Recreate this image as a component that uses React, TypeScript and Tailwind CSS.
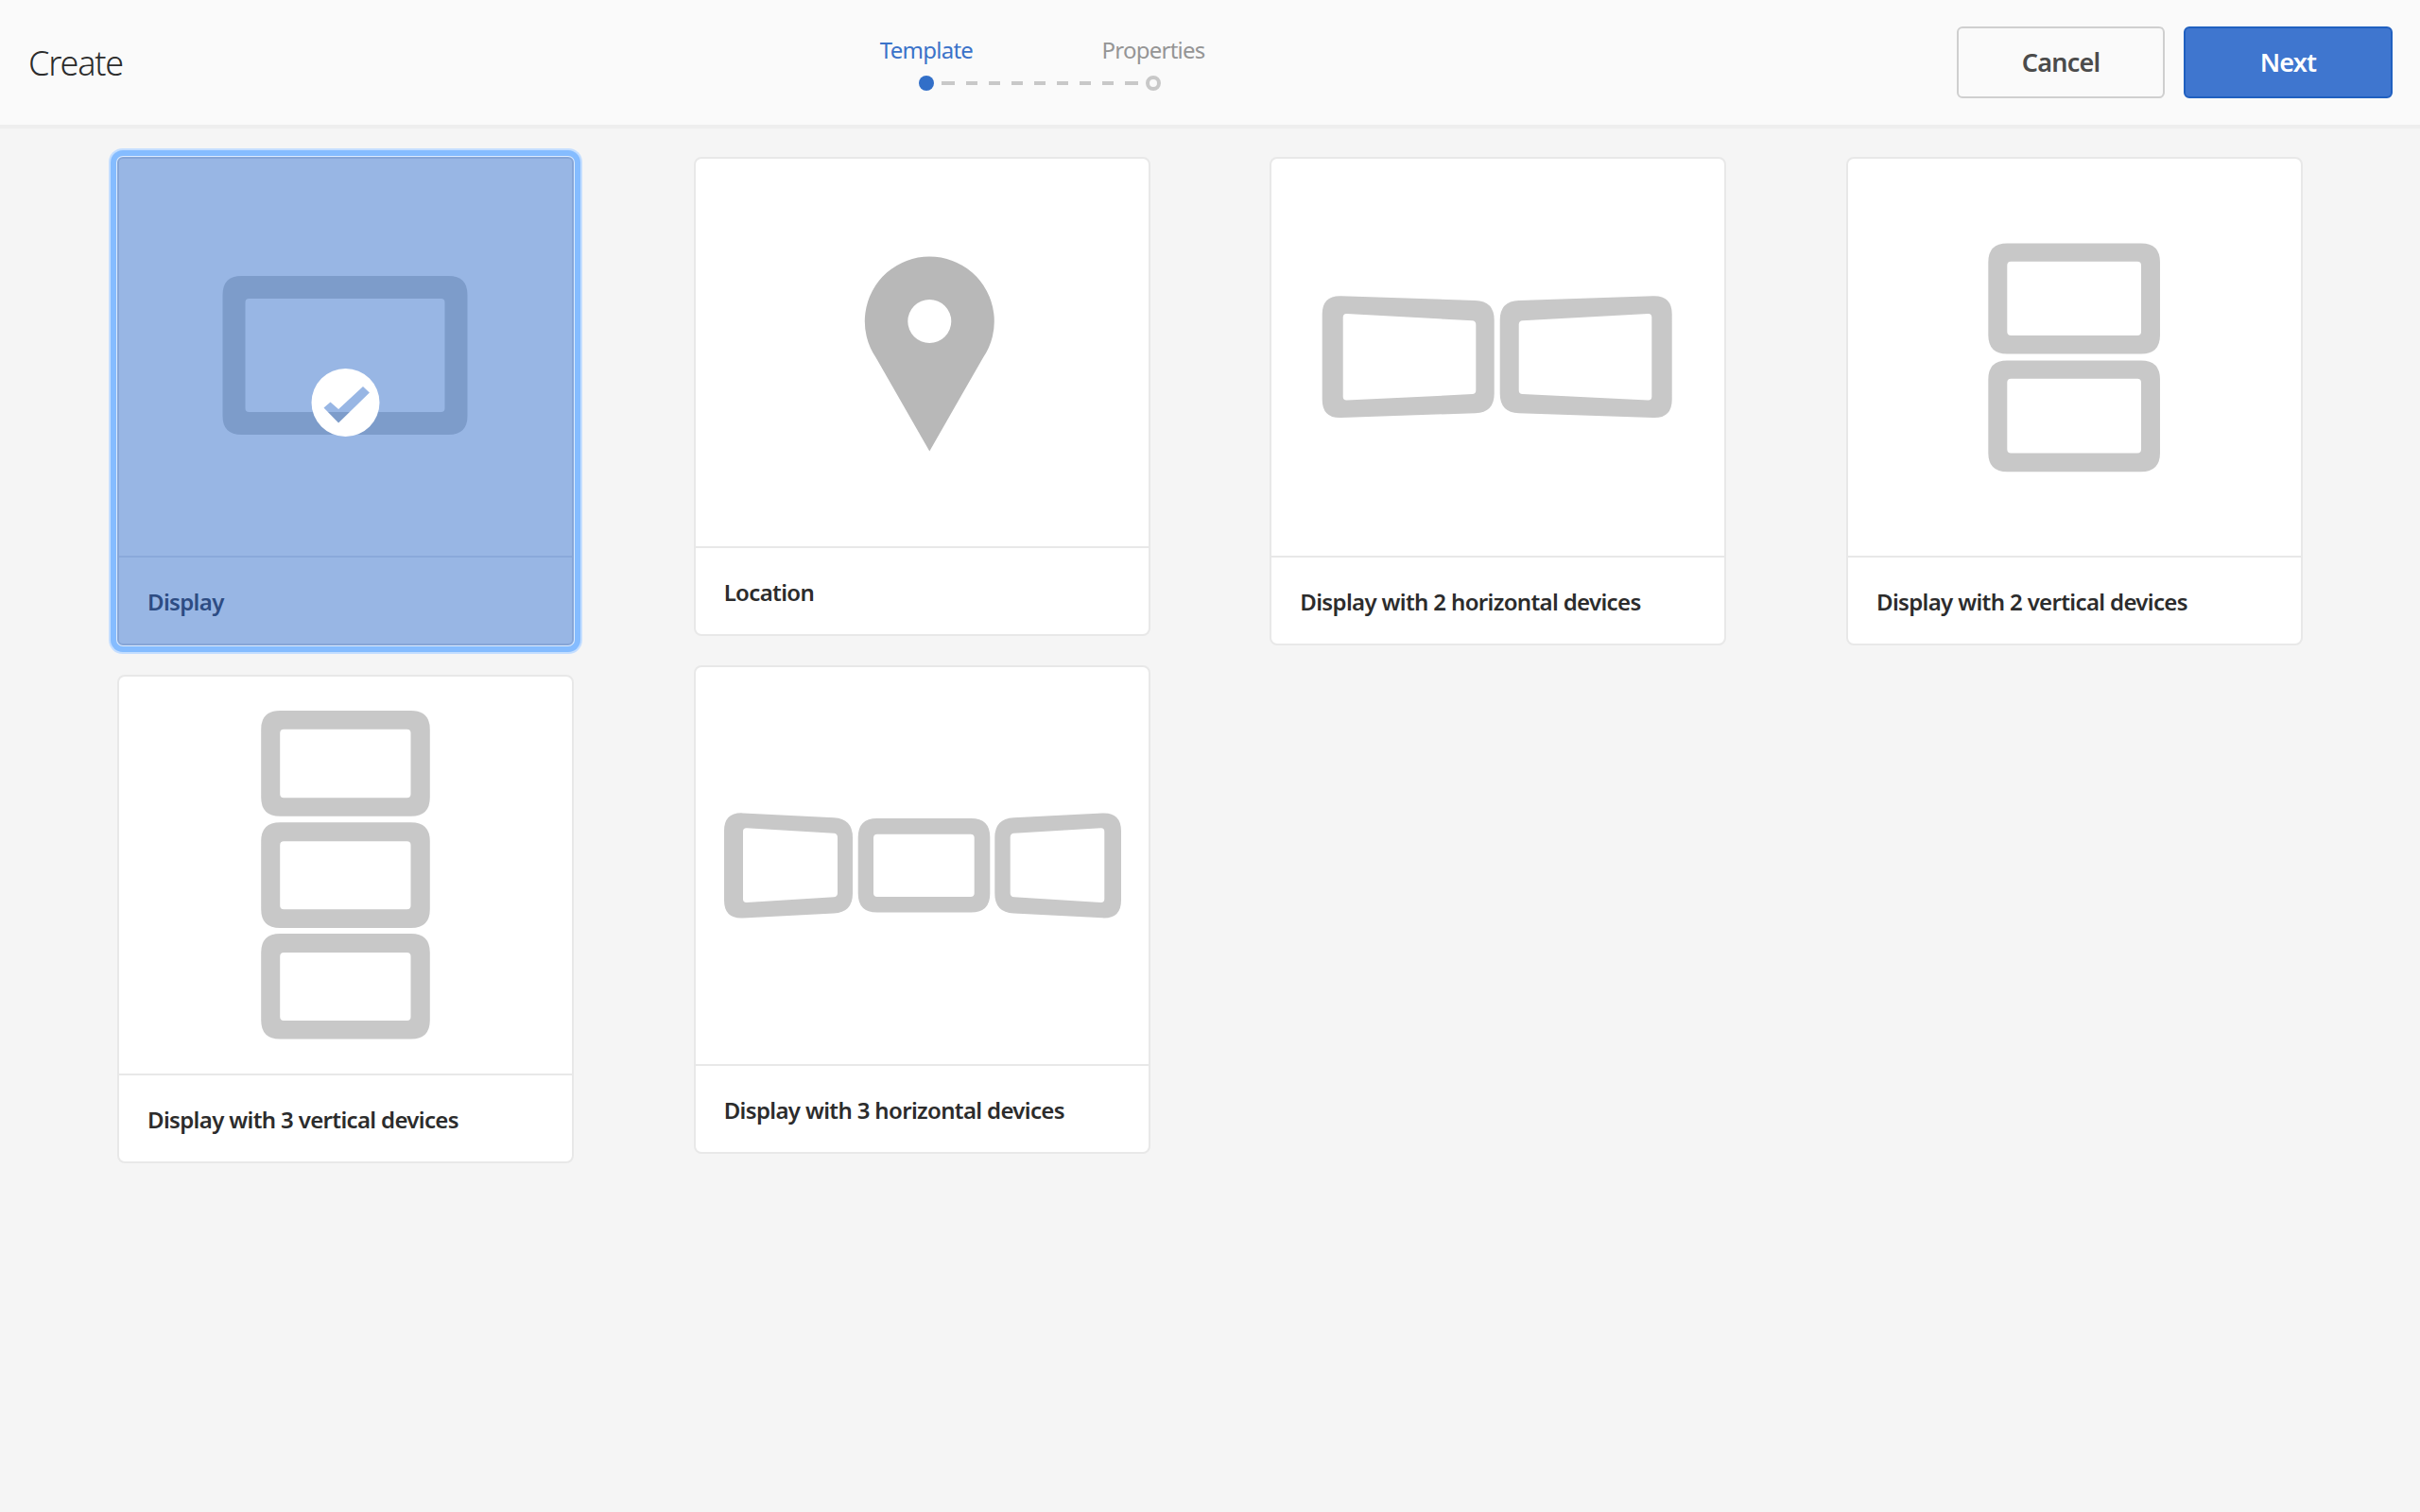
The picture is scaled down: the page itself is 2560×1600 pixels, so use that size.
import React, { ReactNode } from 'react';

type Point = [number, number];

// Builds a closed path with rounded corners from a list of corner points
function roundedPath(points: Point[], r: number): string {
  const n = points.length;
  let d = '';
  points.forEach((p, i) => {
    const prev = points[(i + n - 1) % n];
    const next = points[(i + 1) % n];
    const toward = (q: Point): Point => {
      const dx = q[0] - p[0];
      const dy = q[1] - p[1];
      const len = Math.hypot(dx, dy);
      return [p[0] + (dx / len) * r, p[1] + (dy / len) * r];
    };
    const a = toward(prev);
    const b = toward(next);
    d += `${i === 0 ? 'M' : 'L'}${a[0]} ${a[1]} Q${p[0]} ${p[1]} ${b[0]} ${b[1]} `;
  });
  return d + 'Z';
}

function box(x1: number, y1: number, x2: number, y2: number): Point[] {
  return [[x1, y1], [x2, y1], [x2, y2], [x1, y2]];
}

function Frame({ outer, inner, r = 20, fill = '#c8c8c8' }: { outer: Point[]; inner: Point[]; r?: number; fill?: string }) {
  return <path fillRule="evenodd" fill={fill} d={`${roundedPath(outer, r)} ${roundedPath(inner, 4)}`} />;
}

function Thumb({ short, children }: { short?: boolean; children: ReactNode }) {
  return (
    <svg viewBox={`0 0 479 ${short ? 410 : 420}`} className={short ? 'block h-[410px] w-[479px]' : 'block h-[420px] w-[479px]'}>
      {children}
    </svg>
  );
}

function DisplayIcon() {
  return (
    <Thumb>
      <g transform="translate(0.5 0)">
        <Frame outer={box(109, 124, 368, 292)} inner={box(133, 148, 344, 268)} fill="#7d9cca" />
        <path
          fill="#ffffff"
          fillRule="evenodd"
          d="M203 258a36 36 0 1 0 72 0a36 36 0 1 0 -72 0Z M216 263.6 L223 257.5 L231.6 265 L257.5 241 L264.4 247.6 L231.6 279.6 Z"
        />
      </g>
    </Thumb>
  );
}

function LocationIcon() {
  return (
    <Thumb short>
      <path
        fill="#b8b8b8"
        fillRule="evenodd"
        transform="translate(1 0)"
        d="M189.64 210.5 A68.5 68.5 0 1 1 302.96 210.5 L246.3 309.5 Z M223.3 172a23 23 0 1 0 46 0a23 23 0 1 0 -46 0Z"
      />
    </Thumb>
  );
}

function TwoHorizontalIcon() {
  return (
    <Thumb>
      <Frame
        outer={[[53.7, 144.5], [235.7, 150.7], [235.7, 268.5], [53.7, 274.7]]}
        inner={[[75.7, 163.8], [216.3, 171.4], [216.3, 248.9], [75.7, 255.8]]}
      />
      <Frame
        outer={[[241.7, 150.7], [423.7, 144.5], [423.7, 274.7], [241.7, 268.5]]}
        inner={[[261.7, 171.4], [402.3, 163.8], [402.3, 255.8], [261.7, 248.9]]}
      />
    </Thumb>
  );
}

function TwoVerticalIcon() {
  return (
    <Thumb>
      <Frame outer={box(148.3, 89.4, 330, 206.5)} inner={box(168.3, 108.7, 310, 187)} />
      <Frame outer={box(148.3, 213.4, 330, 331.2)} inner={box(168.3, 232.7, 310, 311.5)} />
    </Thumb>
  );
}

function ThreeVerticalIcon() {
  return (
    <Thumb>
      <g transform="translate(0.5 0.7)">
        <Frame outer={box(149.7, 35.2, 328.3, 147.1)} inner={box(169.7, 55.1, 308, 127.5)} />
        <Frame outer={box(149.7, 153.6, 328.3, 265.2)} inner={box(169.7, 173.5, 308, 245.5)} />
        <Frame outer={box(149.7, 271.4, 328.3, 382.9)} inner={box(169.7, 291.4, 308, 363.3)} />
      </g>
    </Thumb>
  );
}

function ThreeHorizontalIcon() {
  return (
    <Thumb>
      <g transform="translate(1 0.5)">
        <Frame
          outer={[[29, 152.9], [165, 159.8], [165, 259], [29, 265.9]]}
          inner={[[49, 169.5], [149, 175.6], [149, 242.5], [49, 248.7]]}
        />
        <Frame outer={box(170.7, 159.5, 310.3, 259)} inner={box(187, 176.3, 293.7, 242.5)} />
        <Frame
          outer={[[315.3, 159.8], [449, 152.9], [449, 265.9], [315.3, 259]]}
          inner={[[331.7, 175.6], [431.3, 169.5], [431.3, 248.7], [331.7, 242.5]]}
        />
      </g>
    </Thumb>
  );
}

function TemplateCard({ label, selected, children }: { label: string; selected?: boolean; children: ReactNode }) {
  if (selected) {
    return (
      <div className="w-[483px] overflow-hidden rounded-[6px] border-2 border-[#86a5d6] bg-[#98b6e4] shadow-[0_0_0_1px_#dcebff,0_0_0_7px_#85bcff,0_0_0_9px_#c4deff]">
        {children}
        <div className="flex h-[93px] items-center border-t-2 border-[#8aa9da] pl-[30px] pt-[2px] text-[24px] font-semibold tracking-[-0.65px] text-[#2d4c83]">
          {label}
        </div>
      </div>
    );
  }
  return (
    <div className="w-[483px] overflow-hidden rounded-[8px] border-2 border-[#e8e8e8] bg-white">
      {children}
      <div className="flex h-[93px] items-center border-t-2 border-[#e8e8e8] pl-[30px] pt-[2px] text-[24px] font-semibold tracking-[-0.65px] text-[#2c2c2c]">
        {label}
      </div>
    </div>
  );
}

export default function App() {
  return (
    <div className="flex h-[1600px] flex-col bg-[#f5f5f5] font-['Noto_Sans',sans-serif]">
      <header className="flex h-[136px] items-center border-b-4 border-[#eeeeee] bg-[#fafafa]">
        <div className="w-[860px] pl-[30px] pt-[2px] text-[36px] font-light tracking-[-1.2px] text-[#2c2c2c]">Create</div>

        {/* Wizard steps */}
        <div className="flex w-[480px] flex-col items-center">
          <div className="grid w-full grid-cols-2 text-center text-[24px] leading-[32px] tracking-[-0.75px]">
            <span className="text-[#3b73c9]">Template</span>
            <span className="text-[#959595]">Properties</span>
          </div>
          <div className="mt-[11px] flex items-center">
            <span className="mr-[8px] h-[16px] w-[16px] rounded-full bg-[#326fc8]" />
            <div className="flex gap-[12px]">
              <span className="h-[4px] w-[14px] bg-[#c8c8c8]" />
              {[0, 1, 2, 3, 4, 5, 6].map((i) => (
                <span key={i} className="h-[4px] w-[12px] bg-[#c8c8c8]" />
              ))}
              <span className="h-[4px] w-[14px] bg-[#c8c8c8]" />
            </div>
            <span className="ml-[8px] h-[16px] w-[16px] rounded-full border-4 border-[#c8c8c8]" />
          </div>
        </div>

        <div className="flex flex-1 justify-end gap-[20px] pr-[29px]">
          <button className="h-[76px] w-[220px] rounded-[6px] border-2 border-[#cfcfcf] text-[27px] font-semibold tracking-[-0.8px] text-[#4b4b4b]">
            Cancel
          </button>
          <button className="h-[76px] w-[221px] rounded-[6px] border-2 border-[#2060c0] bg-[#3f76cf] text-[27px] font-semibold tracking-[-0.8px] text-white">
            Next
          </button>
        </div>
      </header>

      <main className="grid grid-cols-[483px_483px_483px_483px] items-start gap-x-[126.67px] pl-[124px] pt-[30px]">
        <div className="flex flex-col gap-[31px]">
          <TemplateCard label="Display" selected>
            <DisplayIcon />
          </TemplateCard>
          <TemplateCard label="Display with 3 vertical devices">
            <ThreeVerticalIcon />
          </TemplateCard>
        </div>
        <div className="flex flex-col gap-[31px]">
          <TemplateCard label="Location">
            <LocationIcon />
          </TemplateCard>
          <TemplateCard label="Display with 3 horizontal devices">
            <ThreeHorizontalIcon />
          </TemplateCard>
        </div>
        <TemplateCard label="Display with 2 horizontal devices">
          <TwoHorizontalIcon />
        </TemplateCard>
        <TemplateCard label="Display with 2 vertical devices">
          <TwoVerticalIcon />
        </TemplateCard>
      </main>
    </div>
  );
}
